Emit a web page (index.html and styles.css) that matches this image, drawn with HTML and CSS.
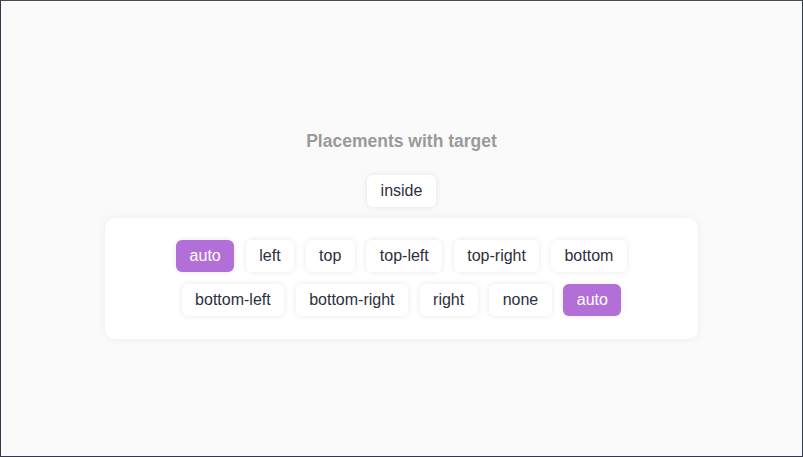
FILE: index.html
```html
<!DOCTYPE html>
<html>
<head>
<meta charset="utf-8">
<link rel="stylesheet" href="styles.css">
</head>
<body>
<div class="frame">
  <div class="content">
    <h3 class="title">Placements with target</h3>
    <div class="target-row">
      <button class="btn">inside</button>
    </div>
    <div class="card">
      <div class="row">
        <button class="btn active">auto</button>
        <button class="btn">left</button>
        <button class="btn">top</button>
        <button class="btn">top-left</button>
        <button class="btn">top-right</button>
        <button class="btn">bottom</button>
      </div>
      <div class="row">
        <button class="btn">bottom-left</button>
        <button class="btn">bottom-right</button>
        <button class="btn">right</button>
        <button class="btn">none</button>
        <button class="btn active">auto</button>
      </div>
    </div>
  </div>
</div>
</body>
</html>
```

FILE: styles.css
```css
html, body {
  margin: 0;
  padding: 0;
  background: #fafafa;
}
.frame {
  box-sizing: border-box;
  width: 803px;
  height: 457px;
  border: 1px solid #34364a;
  border-top-color: #4a4a52;
  background: #fafafa;
  display: flex;
  justify-content: center;
  font-family: "Liberation Sans", Arial, sans-serif;
}
.content {
  display: flex;
  flex-direction: column;
  align-items: center;
  padding-top: 130px;
}
.title {
  margin: 0;
  font-size: 17.5px;
  line-height: 20px;
  font-weight: bold;
  color: #9a9a9a;
}
.target-row {
  margin-top: 24px;
  display: flex;
  justify-content: center;
}
.card {
  margin-top: 11px;
  width: 593px;
  box-sizing: border-box;
  background: #fff;
  border-radius: 10px;
  box-shadow: 0 0 8px rgba(0, 0, 0, 0.06);
  padding: 22px 0 23px;
  display: flex;
  flex-direction: column;
  gap: 11.5px;
}
.row {
  display: flex;
  justify-content: center;
  gap: 11.5px;
}
.btn {
  height: 32px;
  padding: 0 13.5px;
  border: none;
  border-radius: 6px;
  background: #fff;
  color: #2c3040;
  font-family: "Liberation Sans", Arial, sans-serif;
  font-size: 16px;
  box-shadow: 0 0 6px rgba(0, 0, 0, 0.09);
  cursor: pointer;
}
.btn.active {
  background: #b36fd8;
  color: #fff;
}
```
